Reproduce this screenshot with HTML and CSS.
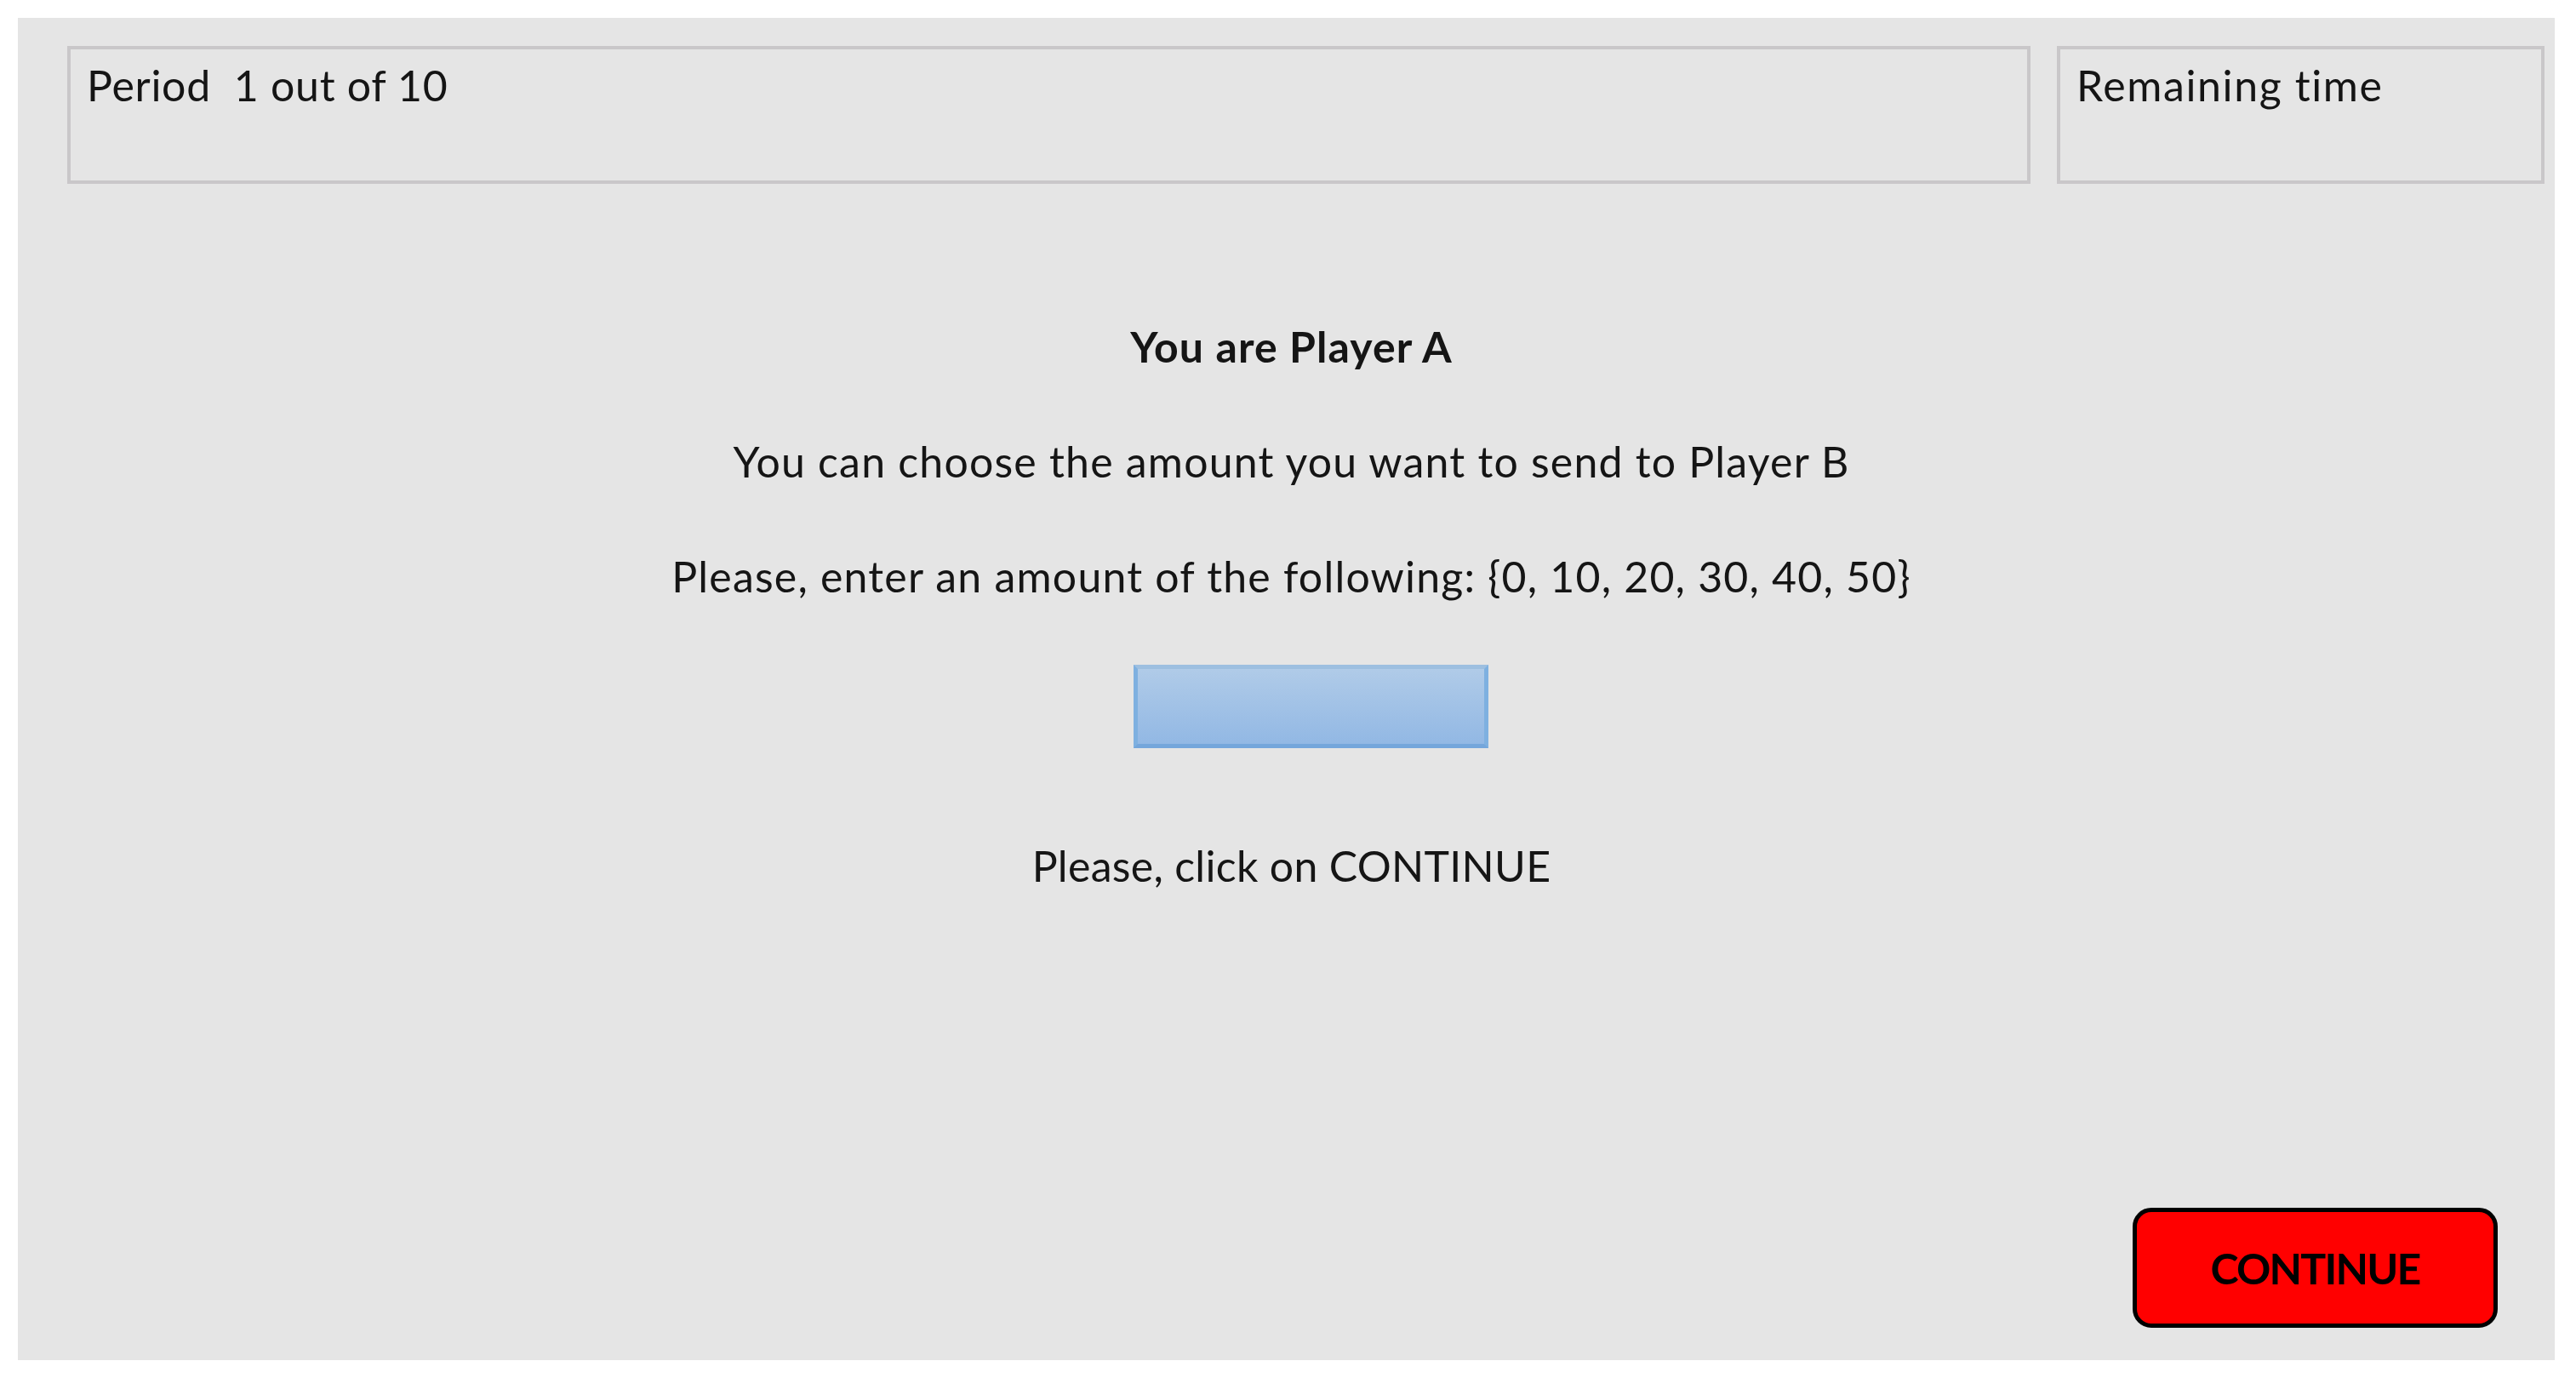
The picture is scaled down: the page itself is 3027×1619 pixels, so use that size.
FILE: index.html
```html
<!DOCTYPE html>
<html lang="en">
<head>
<meta charset="utf-8">
<title>Player A</title>
<link rel="stylesheet" href="styles.css">
</head>
<body>
<div class="panel">
  <div class="header">
    <div class="box box-period">Period&nbsp; 1 out of 10</div>
    <div class="box box-time">Remaining time</div>
  </div>
  <div class="main">
    <p class="line title">You are Player A</p>
    <p class="line">You can choose the amount you want to send to Player B</p>
    <p class="line">Please, enter an amount of the following: {0, 10, 20, 30, 40, 50}</p>
    <div class="amount"></div>
    <p class="line click">Please, click on CONTINUE</p>
  </div>
  <div class="footer">
    <button class="continue" type="button">CONTINUE</button>
  </div>
</div>
</body>
</html>
```

FILE: styles.css
```css
html, body {
  margin: 0;
  padding: 0;
  background: #ffffff;
}

body {
  font-family: Lato, "Open Sans", "Liberation Sans", sans-serif;
  color: #151515;
}

.panel {
  margin: 21px 0 0 21px;
  width: 2981px;
  height: 1577px;
  background: #e5e5e5;
  display: flex;
  flex-direction: column;
}

.header {
  display: flex;
  gap: 31px;
  padding: 33px 12px 0 58px;
}

.box {
  box-sizing: border-box;
  height: 162px;
  border: 4px solid #c9c7c9;
  font-size: 50px;
  letter-spacing: 1.1px;
  padding: 12px 0 0 19px;
  line-height: 60px;
}

.box-period {
  width: 2307px;
  letter-spacing: 0.7px;
}

.box-time {
  width: 573px;
  letter-spacing: 1.6px;
}

.main {
  flex: 1;
  display: flex;
  flex-direction: column;
  align-items: center;
  padding-top: 124px;
  padding-left: 12px;
}

.line {
  margin: 0;
  font-size: 50px;
  letter-spacing: 1.2px;
  line-height: 135px;
  white-space: nowrap;
}

.title {
  font-weight: 700;
  letter-spacing: 1.1px;
}

.amount {
  box-sizing: border-box;
  width: 417px;
  height: 98px;
  margin: 36px 0 0 46px;
  border: 5px solid #7eb0e0;
  border-top-color: #9dbfe0;
  border-bottom-color: #74a6db;
  background: linear-gradient(#b0cbe8, #92b8e4);
}

.click {
  margin-top: 71px;
  letter-spacing: 0.3px;
}

.footer {
  display: flex;
  justify-content: flex-end;
  padding: 0 67px 38px 0;
}

.continue {
  box-sizing: border-box;
  width: 429px;
  height: 141px;
  border: 5px solid #000000;
  border-radius: 22px;
  background: #ff0000;
  color: #000000;
  font-family: Lato, "Open Sans", "Liberation Sans", sans-serif;
  font-size: 50px;
  font-weight: 700;
  letter-spacing: -1.8px;
  padding: 0;
}
```
